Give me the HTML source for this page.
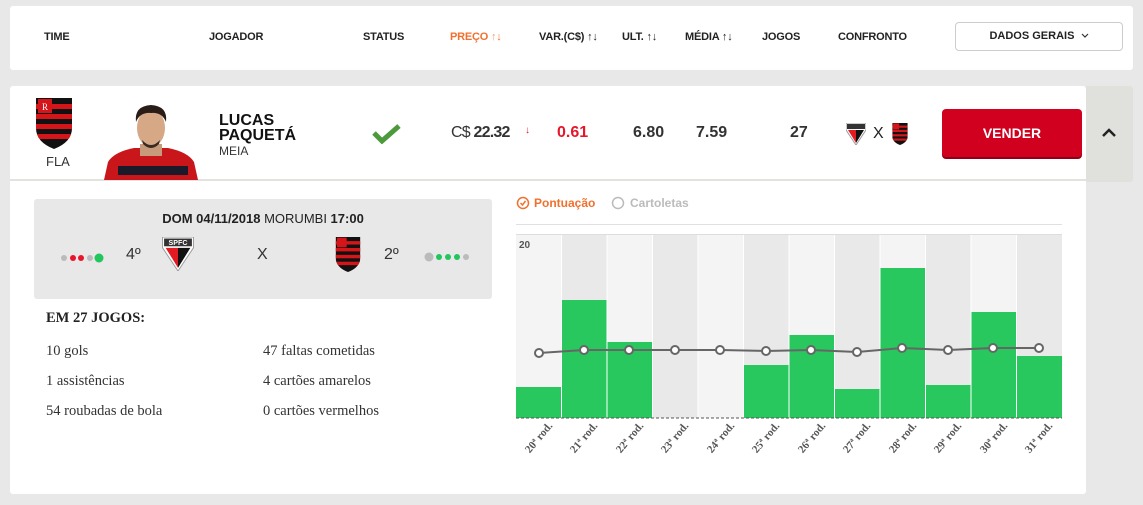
<!DOCTYPE html>
<html><head><meta charset="utf-8"><style>
*{margin:0;padding:0;box-sizing:border-box}
body{width:1143px;height:505px;background:#e8e8e8;font-family:"Liberation Sans",Arial,sans-serif;position:relative;overflow:hidden;color:#222}
.a{position:absolute}
.card{background:#fff;border-radius:3px}
.h{font-size:11px;font-weight:bold;color:#222;top:31px;letter-spacing:-0.2px}
.num{font-size:16px;font-weight:bold;color:#333;top:124px}
.st{font-family:"Liberation Serif",serif;font-size:14.5px;color:#333}
</style></head><body>
<div class="a card" style="left:10px;top:6px;width:1123px;height:64px"></div>
<div class="a h" style="left:44px">TIME</div>
<div class="a h" style="left:209px">JOGADOR</div>
<div class="a h" style="left:363px">STATUS</div>
<div class="a h" style="left:450px;color:#f0702e">PREÇO <span style="color:#f5a07a">↑</span>↓</div>
<div class="a h" style="left:539px">VAR.(C$) ↑↓</div>
<div class="a h" style="left:622px">ULT. ↑↓</div>
<div class="a h" style="left:685px">MÉDIA ↑↓</div>
<div class="a h" style="left:762px">JOGOS</div>
<div class="a h" style="left:838px">CONFRONTO</div>
<div class="a" style="left:955px;top:22px;width:168px;height:29px;border:1px solid #ccc;border-radius:4px;font-size:11px;font-weight:bold;text-align:center;line-height:27px">DADOS GERAIS &nbsp;<svg width="8" height="6" viewBox="0 0 8 6"><path d="M1 1 L4 4 L7 1" stroke="#333" stroke-width="1.2" fill="none"/></svg></div>

<div class="a card" style="left:10px;top:86px;width:1076px;height:408px"></div>
<div class="a" style="left:1086px;top:86px;width:47px;height:96px;background:#e0e0dc;border-radius:0 3px 3px 0"></div>
<svg class="a" style="left:1101px;top:126px" width="16" height="12" viewBox="0 0 16 12"><path d="M2 10 L8 4 L14 10" stroke="#222" stroke-width="2.5" fill="none"/></svg>
<div class="a" style="left:10px;top:179px;width:1076px;height:2px;background:#e2e2de"></div>

<svg class="a" style="left:36px;top:98px" width="36" height="51" viewBox="0 0 36 51">
<defs><clipPath id="sh"><path d="M0 0H36V30Q36 44 18 51Q0 44 0 30Z"/></clipPath></defs>
<g clip-path="url(#sh)"><rect width="36" height="51" fill="#111"/>
<rect y="6" width="36" height="5" fill="#d4161b"/><rect y="16" width="36" height="5" fill="#d4161b"/><rect y="26" width="36" height="5" fill="#d4161b"/><rect y="36" width="36" height="5" fill="#d4161b"/>
<rect x="2" y="1" width="14" height="14" fill="#d4161b"/><text x="9" y="12" font-size="9" fill="#fff" text-anchor="middle" font-family="Liberation Serif">R</text></g></svg>
<div class="a" style="left:46px;top:154px;font-size:13px;color:#333">FLA</div>

<svg class="a" style="left:104px;top:100px" width="94" height="80" viewBox="0 0 94 80">
<path d="M0 80 L4 62 Q10 52 30 48 L64 48 Q84 52 90 62 L94 80Z" fill="#c8161b"/>
<rect x="14" y="66" width="70" height="9" fill="#1a1a2a"/>
<rect x="36" y="44" width="22" height="12" fill="#c89a7c"/>
<ellipse cx="47" cy="28" rx="14" ry="19" fill="#d6a886"/>
<path d="M32 22 Q30 6 47 5 Q64 6 62 22 Q58 12 47 13 Q36 12 32 22Z" fill="#2a1d18"/>
<path d="M38 40 Q47 50 56 40 L55 44 Q47 52 39 44Z" fill="#3a2a22"/>
</svg>

<div class="a" style="left:219px;top:113px;font-size:16px;font-weight:bold;line-height:15px;color:#111">LUCAS<br>PAQUETÁ</div>
<div class="a" style="left:219px;top:144px;font-size:12px;color:#333">MEIA</div>
<svg class="a" style="left:371px;top:123px" width="31" height="21" viewBox="0 0 31 21"><path d="M3 10 L11 18 L28 3" stroke="#4c9a3c" stroke-width="5" fill="none"/></svg>
<div class="a" style="left:451px;top:124px;font-size:16px;color:#333;letter-spacing:-0.8px">C$ <b>22.32</b></div>
<div class="a" style="left:525px;top:125px;font-size:10px;color:#e8162b">↓</div>
<div class="a num" style="left:557px;color:#e8162b">0.61</div>
<div class="a num" style="left:633px">6.80</div>
<div class="a num" style="left:696px">7.59</div>
<div class="a num" style="left:790px">27</div>
<svg class="a" style="left:846px;top:123px" width="20" height="22" viewBox="0 0 20 22"><path d="M0 0H20V7L10 22L0 7Z" fill="#fff" stroke="#999"/><rect x="1" y="1" width="18" height="5" fill="#333"/><path d="M2 7H10V20Z" fill="#e21b22"/><path d="M10 7H18L10 20Z" fill="#111"/></svg>
<div class="a" style="left:873px;top:125px;font-size:16px;color:#222">X</div>
<svg class="a" style="left:892px;top:123px" width="16" height="22" viewBox="0 0 36 51"><g clip-path="url(#sh)"><rect width="36" height="51" fill="#111"/><rect y="6" width="36" height="5" fill="#d4161b"/><rect y="16" width="36" height="5" fill="#d4161b"/><rect y="26" width="36" height="5" fill="#d4161b"/><rect y="36" width="36" height="5" fill="#d4161b"/><rect x="2" y="1" width="14" height="14" fill="#d4161b"/></g></svg>
<div class="a" style="left:942px;top:109px;width:140px;height:48px;background:#d1001e;border-radius:4px;box-shadow:0 2px 0 #8e0015;color:#fff;font-size:14px;font-weight:bold;text-align:center;line-height:48px">VENDER</div>

<div class="a" style="left:34px;top:199px;width:458px;height:100px;background:#e8e8e8;border-radius:3px"></div>
<div class="a" style="left:34px;top:211px;width:458px;text-align:center;font-size:13px;color:#222"><b>DOM 04/11/2018</b> MORUMBI <b>17:00</b></div>
<svg class="a" style="left:60px;top:253px" width="50" height="10"><circle cx="4" cy="5" r="3" fill="#bbb"/><circle cx="13" cy="5" r="3" fill="#e8162b"/><circle cx="21" cy="5" r="3" fill="#e8162b"/><circle cx="30" cy="5" r="3" fill="#bbb"/><circle cx="39" cy="5" r="4.5" fill="#22c55e"/></svg>
<div class="a" style="left:126px;top:246px;font-size:16px;color:#333">4º</div>
<svg class="a" style="left:161px;top:237px" width="34" height="34" viewBox="0 0 20 22"><path d="M0 0H20V7L10 22L0 7Z" fill="#fff" stroke="#999" stroke-width=".6"/><rect x="1" y="1" width="18" height="5" fill="#333"/><text x="10" y="5.2" font-size="4.6" fill="#fff" text-anchor="middle" font-weight="bold">SPFC</text><path d="M2 7H10V20Z" fill="#e21b22"/><path d="M10 7H18L10 20Z" fill="#111"/></svg>
<div class="a" style="left:257px;top:246px;font-size:16px;color:#333">X</div>
<svg class="a" style="left:334px;top:237px" width="28" height="35" viewBox="0 0 36 51"><g clip-path="url(#sh)"><rect width="36" height="51" fill="#111"/><rect y="6" width="36" height="5" fill="#d4161b"/><rect y="16" width="36" height="5" fill="#d4161b"/><rect y="26" width="36" height="5" fill="#d4161b"/><rect y="36" width="36" height="5" fill="#d4161b"/><rect x="2" y="1" width="14" height="14" fill="#d4161b"/></g></svg>
<div class="a" style="left:384px;top:246px;font-size:16px;color:#333">2º</div>
<svg class="a" style="left:423px;top:251px" width="50" height="12"><circle cx="6" cy="6" r="4.5" fill="#bbb"/><circle cx="16" cy="6" r="3" fill="#22c55e"/><circle cx="25" cy="6" r="3" fill="#22c55e"/><circle cx="34" cy="6" r="3" fill="#22c55e"/><circle cx="43" cy="6" r="3" fill="#bbb"/></svg>

<div class="a st" style="left:46px;top:310px;font-weight:bold;color:#222">EM 27 JOGOS:</div>
<div class="a st" style="left:46px;top:343px">10 gols</div>
<div class="a st" style="left:46px;top:373px">1 assistências</div>
<div class="a st" style="left:46px;top:403px">54 roubadas de bola</div>
<div class="a st" style="left:263px;top:343px">47 faltas cometidas</div>
<div class="a st" style="left:263px;top:373px">4 cartões amarelos</div>
<div class="a st" style="left:263px;top:403px">0 cartões vermelhos</div>

<svg class="a" style="left:516px;top:196px" width="14" height="14"><circle cx="7" cy="7" r="5.5" stroke="#f0702e" stroke-width="1.5" fill="none"/><path d="M4.5 7 L6.5 9 L9.5 5" stroke="#f0702e" stroke-width="1.5" fill="none"/></svg>
<div class="a" style="left:534px;top:196px;font-size:12px;font-weight:bold;color:#f0702e">Pontuação</div>
<svg class="a" style="left:611px;top:196px" width="14" height="14"><circle cx="7" cy="7" r="5.5" stroke="#bbb" stroke-width="1.5" fill="none"/></svg>
<div class="a" style="left:630px;top:196px;font-size:12px;font-weight:bold;color:#bbb">Cartoletas</div>
<div class="a" style="left:516px;top:224px;width:546px;height:1px;background:#e0e0e0"></div>

<svg class="a" style="left:516px;top:234px" width="546" height="230" viewBox="0 0 546 230">
<rect x="0" y="0" width="546" height="1.5" fill="#ddd"/>
<rect x="0" y="1" width="45" height="183" fill="#f4f4f4"/>
<rect x="45.5" y="1" width="45" height="183" fill="#e9e9e9"/>
<rect x="91" y="1" width="45" height="183" fill="#f4f4f4"/>
<rect x="136.5" y="1" width="45" height="183" fill="#e9e9e9"/>
<rect x="182" y="1" width="45" height="183" fill="#f4f4f4"/>
<rect x="227.5" y="1" width="45" height="183" fill="#e9e9e9"/>
<rect x="273" y="1" width="45" height="183" fill="#f4f4f4"/>
<rect x="318.5" y="1" width="45" height="183" fill="#e9e9e9"/>
<rect x="364" y="1" width="45" height="183" fill="#f4f4f4"/>
<rect x="409.5" y="1" width="45" height="183" fill="#e9e9e9"/>
<rect x="455" y="1" width="45" height="183" fill="#f4f4f4"/>
<rect x="500.5" y="1" width="45.5" height="183" fill="#e9e9e9"/>
<g fill="#28c85f">
<rect x="0" y="153" width="45" height="31"/>
<rect x="45.5" y="66" width="45" height="118"/>
<rect x="91" y="108" width="45" height="76"/>
<rect x="227.5" y="131" width="45" height="53"/>
<rect x="273" y="101" width="45" height="83"/>
<rect x="318.5" y="155" width="45" height="29"/>
<rect x="364" y="34" width="45" height="150"/>
<rect x="409.5" y="151" width="45" height="33"/>
<rect x="455" y="78" width="45" height="106"/>
<rect x="500.5" y="122" width="45.5" height="62"/>
</g>
<g fill="#fff">
<rect x="45" y="1" width="1" height="183"/><rect x="90.5" y="1" width="1" height="183"/><rect x="136" y="1" width="1" height="183"/><rect x="181.5" y="1" width="1" height="183"/><rect x="227" y="1" width="1" height="183"/><rect x="272.5" y="1" width="1" height="183"/><rect x="318" y="1" width="1" height="183"/><rect x="363.5" y="1" width="1" height="183"/><rect x="409" y="1" width="1" height="183"/><rect x="454.5" y="1" width="1" height="183"/><rect x="500" y="1" width="1" height="183"/>
</g>
<line x1="0" y1="184" x2="546" y2="184" stroke="#555" stroke-dasharray="3,2"/>
<text x="3" y="14" font-size="10" font-weight="bold" fill="#555" font-family="Liberation Sans">20</text>
<polyline points="23,119 68,116 113,116 159,116 204,116 250,117 295,116 341,118 386,114 432,116 477,114 523,114" fill="none" stroke="#666" stroke-width="2"/>
<g fill="#fff" stroke="#666" stroke-width="2">
<circle cx="23" cy="119" r="4"/><circle cx="68" cy="116" r="4"/><circle cx="113" cy="116" r="4"/><circle cx="159" cy="116" r="4"/><circle cx="204" cy="116" r="4"/><circle cx="250" cy="117" r="4"/><circle cx="295" cy="116" r="4"/><circle cx="341" cy="118" r="4"/><circle cx="386" cy="114" r="4"/><circle cx="432" cy="116" r="4"/><circle cx="477" cy="114" r="4"/><circle cx="523" cy="114" r="4"/>
</g>
<g font-size="11" font-weight="bold" fill="#555" font-family="Liberation Serif" text-anchor="end">
<text transform="translate(37,192) rotate(-50)">20ª rod.</text>
<text transform="translate(82,192) rotate(-50)">21ª rod.</text>
<text transform="translate(128,192) rotate(-50)">22ª rod.</text>
<text transform="translate(173,192) rotate(-50)">23ª rod.</text>
<text transform="translate(219,192) rotate(-50)">24ª rod.</text>
<text transform="translate(264,192) rotate(-50)">25ª rod.</text>
<text transform="translate(310,192) rotate(-50)">26ª rod.</text>
<text transform="translate(355,192) rotate(-50)">27ª rod.</text>
<text transform="translate(401,192) rotate(-50)">28ª rod.</text>
<text transform="translate(446,192) rotate(-50)">29ª rod.</text>
<text transform="translate(492,192) rotate(-50)">30ª rod.</text>
<text transform="translate(537,192) rotate(-50)">31ª rod.</text>
</g>
</svg>
</body></html>
